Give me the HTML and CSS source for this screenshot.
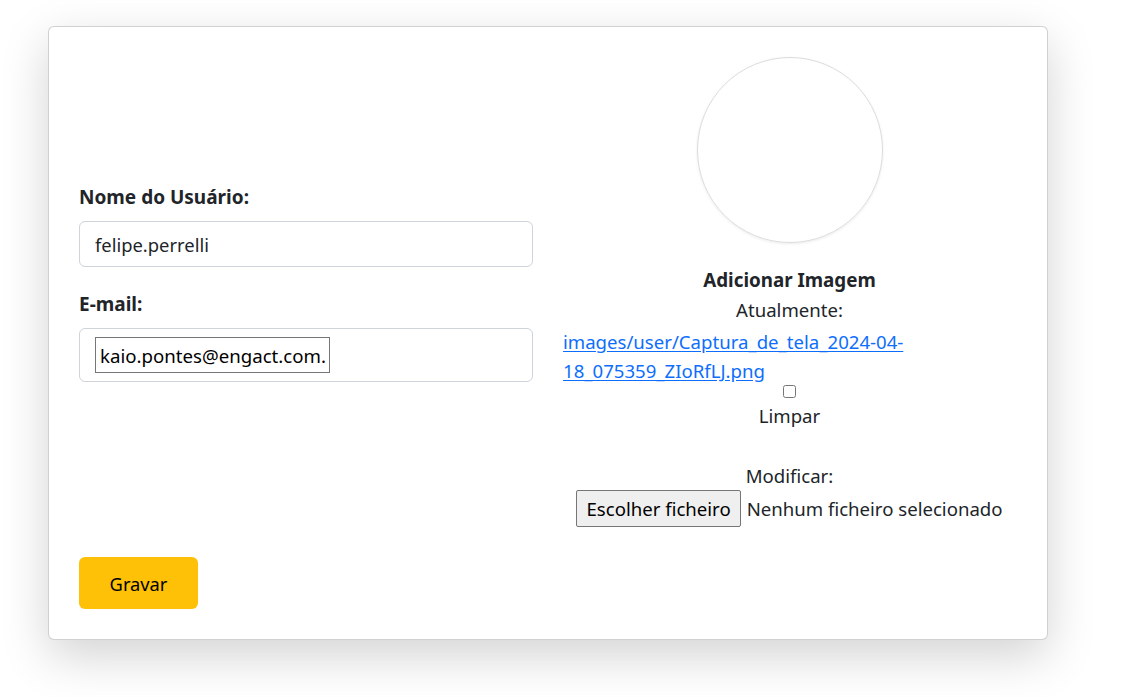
FILE: index.html
```html
<!DOCTYPE html>
<html lang="pt">
<head>
<meta charset="utf-8">
<title>Perfil</title>
<link rel="stylesheet" href="styles.css">
</head>
<body>
<div class="card">
  <div class="row">
    <div class="col-left">
      <div class="group">
        <label class="label">Nome do Usuário:</label>
        <div class="field"><span class="value">felipe.perrelli</span></div>
      </div>
      <div class="group">
        <label class="label">E-mail:</label>
        <div class="field field-wrap"><input class="raw-input" type="text" value="kaio.pontes@engact.com.br"></div>
      </div>
    </div>
    <div class="col-right">
      <div class="avatar"></div>
      <div class="title">Adicionar Imagem</div>
      <div class="line">Atualmente:</div>
      <div class="link-block"><a href="#" class="link">images/user/Captura_de_tela_2024-04-18_075359_ZIoRfLJ.png</a></div>
      <div class="check-line"><input type="checkbox" class="check"></div>
      <div class="line">Limpar</div>
      <div class="line spacer"></div>
      <div class="line">Modificar:</div>
      <div class="file-line"><span class="file-btn">Escolher ficheiro</span><span class="file-text">Nenhum ficheiro selecionado</span></div>
    </div>
  </div>
  <div class="actions">
    <button class="btn-save" type="button">Gravar</button>
  </div>
</div>
</body>
</html>
```
FILE: styles.css
```css
html {
  margin: 0;
  padding: 0;
  background: #fff;
}
body {
  box-sizing: border-box;
  min-height: 697px;
  margin: 0;
  padding: 26px 0 0 48px;
  font-family: "Noto Sans", "Open Sans", sans-serif;
  font-size: 18.6px;
  color: #212529;
  background: #fff;
}
.card {
  box-sizing: border-box;
  width: 1000px;
  height: 614px;
  border: 1px solid rgba(0, 0, 0, 0.18);
  border-radius: 6px;
  background: #fff;
  box-shadow: 0 16px 48px rgba(0, 0, 0, 0.175);
  padding: 30px;
}
.row {
  display: grid;
  grid-template-columns: 454px 453px;
  column-gap: 30px;
  align-items: start;
}
.col-left {
  padding-top: 128px;
}
.group + .group {
  margin-top: 25px;
}
.label {
  display: block;
  font-weight: 700;
  font-size: 19px;
  line-height: 24px;
  margin-bottom: 12px;
}
.field {
  box-sizing: border-box;
  height: 46px;
  border: 1px solid #ced4da;
  border-radius: 6px;
  padding: 0 15px;
  display: flex;
  align-items: center;
}
.field-wrap {
  height: 54px;
}
.value {
  font-size: 18.4px;
}
.raw-input {
  box-sizing: border-box;
  width: 235px;
  height: 36px;
  margin: 0;
  border: 1px solid #767676;
  border-radius: 0;
  padding: 0 4px;
  font-family: inherit;
  font-size: 18.65px;
  color: #000;
  background: #fff;
}
.col-right {
  text-align: center;
  line-height: 30px;
}
.avatar {
  width: 184px;
  height: 184px;
  margin: 0 auto 22px;
  border-radius: 50%;
  border: 1px solid #dcdcdc;
  box-shadow: 0 1px 3px rgba(0, 0, 0, 0.08);
}
.title {
  font-weight: 700;
  font-size: 18.8px;
  line-height: 30px;
}
.link-block {
  text-align: left;
  width: 360px;
  margin-top: 2px;
  line-height: 29px;
}
.link {
  color: #0d6efd;
  text-decoration: underline;
  text-underline-offset: 2px;
}
.check-line {
  height: 16px;
  display: flex;
  justify-content: center;
  align-items: flex-start;
}
.check {
  width: 13px;
  height: 13px;
  margin: 0;
}
.spacer {
  height: 30px;
}
.file-line {
  display: flex;
  justify-content: center;
  align-items: center;
  gap: 6px;
  margin-top: -1px;
  line-height: 24px;
}
.file-btn {
  box-sizing: border-box;
  height: 37px;
  padding: 0 9px;
  display: inline-flex;
  align-items: center;
  background: #efefef;
  border: 1px solid #767676;
  border-radius: 2px;
  color: #000;
}
.actions {
  margin-top: 30px;
}
.btn-save {
  width: 119px;
  height: 52px;
  border: none;
  border-radius: 6px;
  background: #ffc107;
  color: #000;
  font-family: inherit;
  font-size: 18.3px;
  padding: 0;
}
```
